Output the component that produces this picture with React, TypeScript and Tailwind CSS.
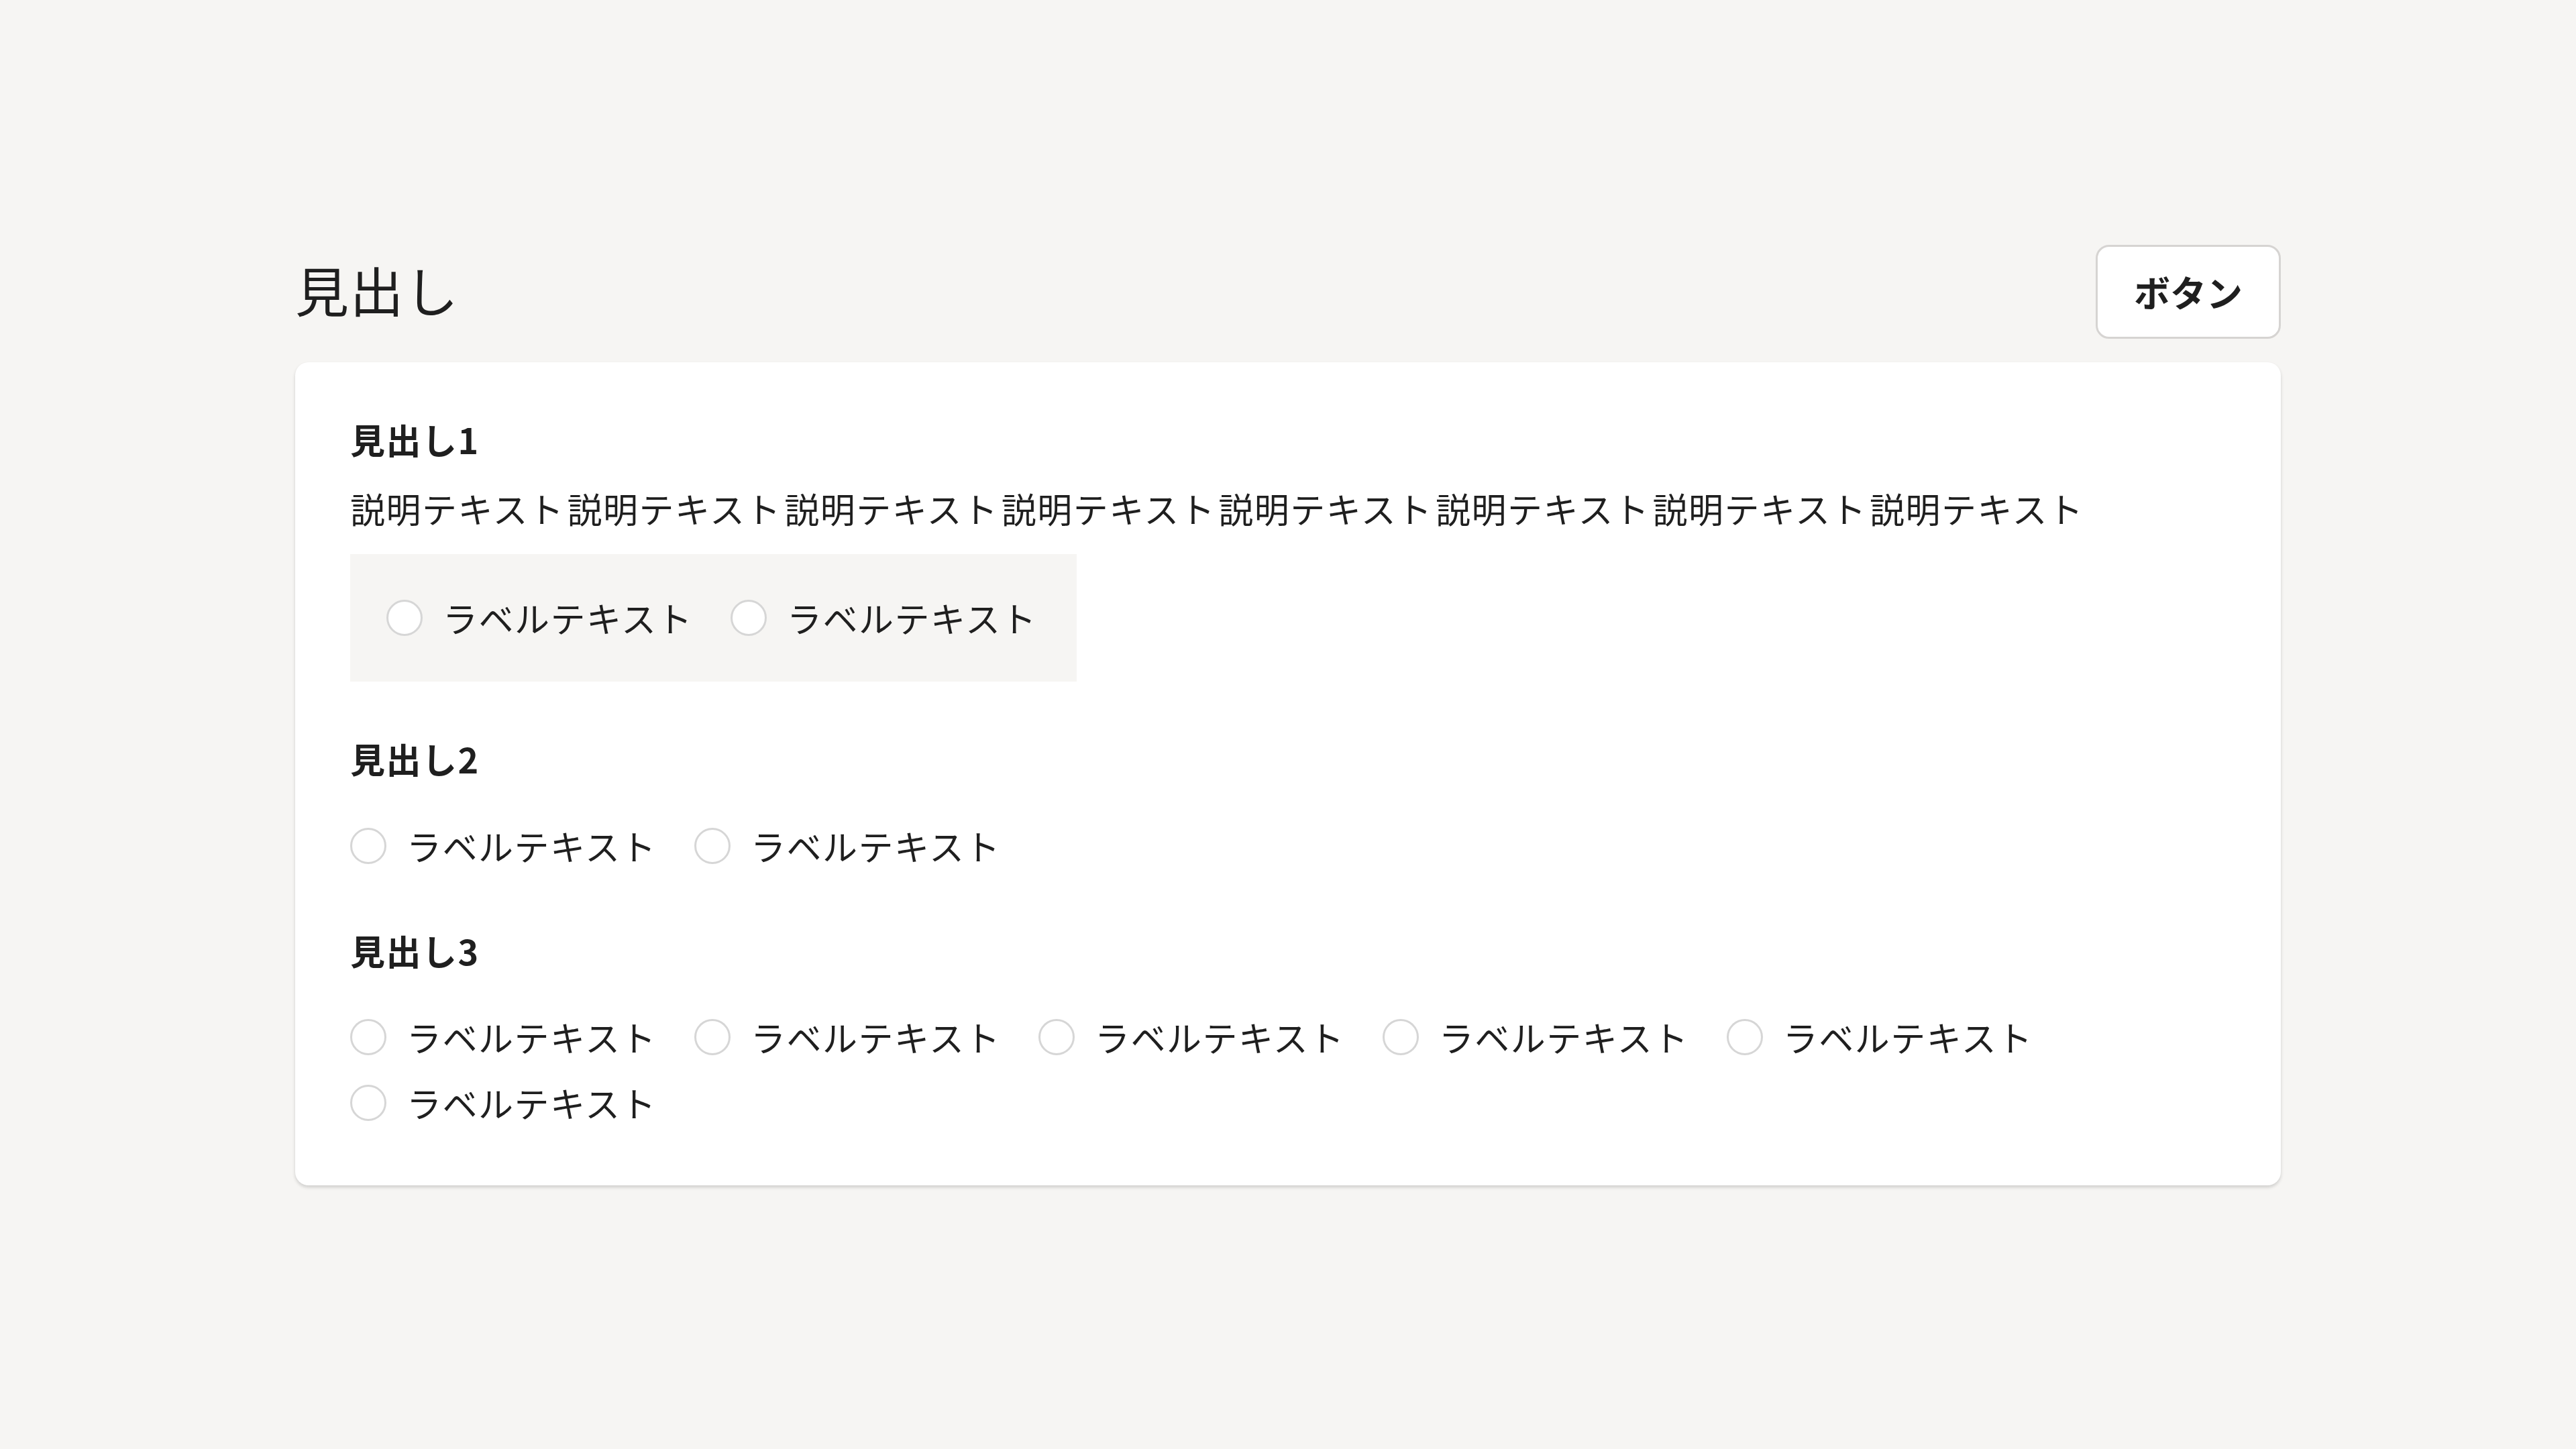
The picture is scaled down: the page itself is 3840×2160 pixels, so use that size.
import React from "react";

const Radio = ({ label }: { label: string }) => (
  <label className="flex items-center gap-x-[30px] leading-[78px] text-[52px] tracking-[1.5px]">
    <span className="block w-[54px] h-[54px] rounded-full border-[3px] border-[#d6d6d6] bg-white shrink-0" />
    <span>{label}</span>
  </label>
);

export default function App() {
  const desc = Array.from({ length: 8 }, () => "説明テキスト").join(" ");
  return (
    <div
      className="min-h-screen w-full bg-[#f6f5f3] text-[#1f1f1f]"
      style={{ fontFamily: '"Noto Sans CJK JP", "Noto Sans", sans-serif' }}
    >
      <div className="w-[2960px] mx-auto pt-[365px] pb-[200px]">
        <div className="flex items-center justify-between">
          <h1 className="text-[80px] font-normal leading-none tracking-[1.5px] mb-[10px]">見出し</h1>
          <button className="w-[276px] h-[140px] rounded-[20px] border-[3px] border-[#d6d4d2] bg-white text-[54px] font-bold leading-none">
            ボタン
          </button>
        </div>
        <div className="mt-[35px] bg-white rounded-[20px] shadow-[0_3px_5px_rgba(0,0,0,0.16)] px-[82px] pt-[76px] pb-[84px]">
          <section>
            <h2 className="text-[52px] font-bold leading-[78px] tracking-[1.5px]">見出し1</h2>
            <p className="mt-[25px] text-[52px] leading-[78px] tracking-[1.5px] [word-spacing:-9px]">{desc}</p>
            <div className="mt-[29px] inline-flex gap-x-[56px] bg-[#f6f5f3] pl-[54px] pr-[59px] py-[56px]">
              <Radio label="ラベルテキスト" />
              <Radio label="ラベルテキスト" />
            </div>
          </section>
          <section className="mt-[76px]">
            <h2 className="text-[52px] font-bold leading-[78px] tracking-[1.5px]">見出し2</h2>
            <div className="mt-[52px] flex flex-wrap gap-x-[56px] gap-y-[20px]">
              <Radio label="ラベルテキスト" />
              <Radio label="ラベルテキスト" />
            </div>
          </section>
          <section className="mt-[78px]">
            <h2 className="text-[52px] font-bold leading-[78px] tracking-[1.5px]">見出し3</h2>
            <div className="mt-[51px] flex flex-wrap gap-x-[56px] gap-y-[20px]">
              {Array.from({ length: 6 }, (_, i) => (
                <Radio key={i} label="ラベルテキスト" />
              ))}
            </div>
          </section>
        </div>
      </div>
    </div>
  );
}
